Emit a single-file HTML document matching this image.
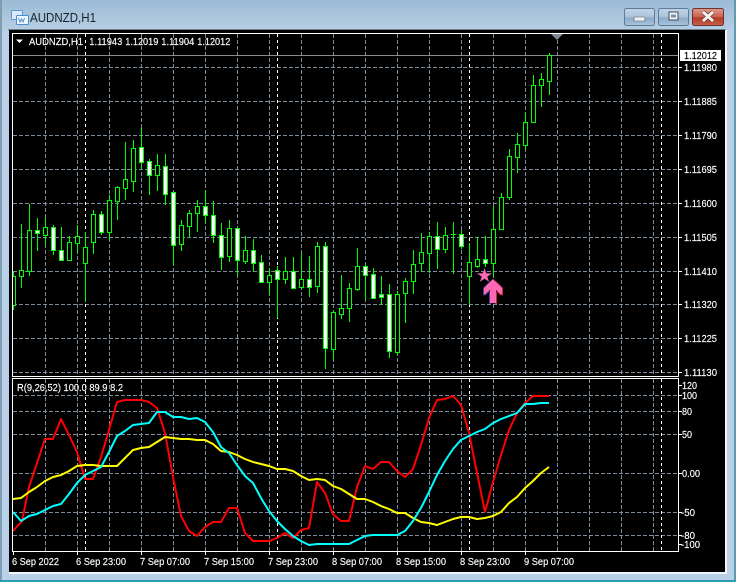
<!DOCTYPE html>
<html><head><meta charset="utf-8"><style>
html,body{margin:0;padding:0;width:736px;height:582px;overflow:hidden;background:#b8d0e6}
svg{display:block}
text{font-family:"Liberation Sans",sans-serif;font-size:10.5px;fill:#fff;stroke:#fff;stroke-width:.15}
</style></head><body>
<svg width="736" height="582" viewBox="0 0 736 582" xmlns="http://www.w3.org/2000/svg">
<defs>
<linearGradient id="tv" x1="0" y1="0" x2="0" y2="1"><stop offset="0" stop-color="#9db9d4"/><stop offset="1" stop-color="#b6cee3"/></linearGradient>
<linearGradient id="bt" x1="0" y1="0" x2="0" y2="1"><stop offset="0" stop-color="#c3d5e6"/><stop offset=".5" stop-color="#a9c2da"/><stop offset=".55" stop-color="#8eabc8"/><stop offset="1" stop-color="#a8c4dc"/></linearGradient>
<linearGradient id="cl" x1="0" y1="0" x2="0" y2="1"><stop offset="0" stop-color="#dd9a8c"/><stop offset=".5" stop-color="#c9604e"/><stop offset=".55" stop-color="#b43a26"/><stop offset="1" stop-color="#c8604a"/></linearGradient>
<clipPath id="c"><rect x="13" y="34" width="665" height="342"/></clipPath>
</defs>

<!-- window -->
<rect width="736" height="582" fill="#b9d1e8"/>
<rect width="736" height="30" fill="url(#tv)"/>
<rect x="0" y="0" width="2" height="582" fill="#7f9cb0"/>
<rect x="734" y="0" width="2" height="582" fill="#5f9bad"/>
<rect x="0" y="580" width="736" height="2" fill="#2a9db0"/>
<rect x="8" y="29" width="718" height="1" fill="#6e7f90"/>
<rect x="9" y="30" width="716" height="542" fill="#000"/>
<rect x="9" y="572" width="718" height="2" fill="#f2f6fa"/>
<rect x="725" y="30" width="2" height="544" fill="#f2f6fa"/>

<!-- title -->
<g>
<rect x="11.5" y="10.5" width="11" height="9" rx="1" fill="#dbeafa" stroke="#5c9ad6"/>
<rect x="16.5" y="15.5" width="12" height="9" rx="1" fill="#f2f8ff" stroke="#4a90d0"/>
<path d="M18.5 18l1.5 4 1.5-3 1.5 3 1.5-4" fill="none" stroke="#4a90d0"/>
</g>
<text x="30" y="22" style="font-size:13px;fill:#16222e;stroke:none" textLength="66" lengthAdjust="spacingAndGlyphs">AUDNZD,H1</text>

<!-- buttons -->
<rect x="624.5" y="8.5" width="30" height="17" rx="2" fill="url(#bt)" stroke="#5d7a99"/>
<rect x="634" y="17" width="11" height="4" rx="1" fill="#eef3f8" stroke="#4d5c6c" stroke-width=".6"/>
<rect x="658.5" y="8.5" width="30" height="17" rx="2" fill="url(#bt)" stroke="#5d7a99"/>
<rect x="669" y="12" width="9" height="8" fill="#eef3f8" stroke="#3e4c5c"/>
<rect x="671" y="14.5" width="5" height="3" fill="#7d93a8"/>
<rect x="692.5" y="8.5" width="31" height="17" rx="2" fill="url(#cl)" stroke="#6e3232"/>
<path d="M703 12l10 9M713 12l-10 9" stroke="#4a2a2a" stroke-width="4.2"/>
<path d="M703 12l10 9M713 12l-10 9" stroke="#f5f0ee" stroke-width="3"/>

<!-- grid main -->
<g stroke="#7f8c9c" stroke-dasharray="4 2" fill="none" shape-rendering="crispEdges">
<path d="M13 67.5H678M13 101.5H678M13 135.5H678M13 169.5H678M13 203.5H678M13 237.5H678M13 271.5H678M13 304.5H678M13 338.5H678M13 372.5H678"/>
<path d="M45.5 34V376M77.5 34V376M109.5 34V376M141.5 34V376M173.5 34V376M205.5 34V376M237.5 34V376M269.5 34V376M301.5 34V376M333.5 34V376M365.5 34V376M397.5 34V376M429.5 34V376M461.5 34V376M493.5 34V376M525.5 34V376M557.5 34V376M589.5 34V376M621.5 34V376M653.5 34V376"/>
</g>
<path d="M85.5 34V376M277.5 34V376M469.5 34V376M661.5 34V376" stroke="#fff" stroke-dasharray="3 3" fill="none" shape-rendering="crispEdges"/>
<path d="M13 55.5H678" stroke="#8a8f94" shape-rendering="crispEdges"/>
<path d="M551 34h12l-6 6z" fill="#7f8a96"/>

<!-- candles -->
<g clip-path="url(#c)" shape-rendering="crispEdges">
<path fill="none" stroke="#00ff00" d="M13.5 271V310M21.5 224V288M29.5 204V276M37.5 218V251M45.5 218V245M53.5 225V255M61.5 227V261M69.5 236V261M77.5 225V253M85.5 232V302M93.5 210V254M101.5 211V235M109.5 195V240M117.5 186V220M125.5 142V200M133.5 140V192M141.5 128V169M149.5 159V195M157.5 154V191M165.5 154V205M173.5 192V265M181.5 220V251M189.5 210V237M197.5 200V232M205.5 190V223M213.5 201V243M221.5 223V270M229.5 220V262M237.5 228V276M245.5 236V264M253.5 239V272M261.5 255V283M269.5 268V295M277.5 266V318M285.5 257V284M293.5 257V288M301.5 253V290M309.5 256V297M317.5 242V293M325.5 242V369M333.5 310V360M341.5 275V319M349.5 283V322M357.5 248V291M365.5 265V300M373.5 268V299M381.5 276V305M389.5 284V358M397.5 291V355M405.5 278V323M413.5 250V294M421.5 233V272M429.5 232V273M437.5 222V269M445.5 227V253M453.5 222V274M461.5 230V249M469.5 243V305M477.5 237V268M485.5 236V267M493.5 206V277M501.5 193V230M509.5 149V200M517.5 133V173M525.5 112V150M533.5 75V123M541.5 73V107M549.5 53V95M451 234.5H456"/>
<path fill="#000" stroke="#00ff00" d="M11.5 276.5v29h4v-29zM19.5 270.5v6h4v-6zM27.5 230.5v41h4v-41zM43.5 227.5v8h4v-8zM67.5 242.5v18h4v-18zM75.5 236.5v7h4v-7zM83.5 247.5v16h4v-16zM91.5 214.5v28h4v-28zM107.5 200.5v32h4v-32zM115.5 187.5v14h4v-14zM123.5 179.5v9h4v-9zM131.5 148.5v33h4v-33zM155.5 165.5v10h4v-10zM179.5 225.5v19h4v-19zM187.5 213.5v13h4v-13zM195.5 206.5v7h4v-7zM227.5 228.5v28h4v-28zM243.5 250.5v11h4v-11zM267.5 275.5v7h4v-7zM283.5 271.5v8h4v-8zM299.5 279.5v8h4v-8zM315.5 246.5v40h4v-40zM331.5 312.5v37h4v-37zM339.5 308.5v6h4v-6zM347.5 288.5v20h4v-20zM355.5 266.5v23h4v-23zM395.5 294.5v58h4v-58zM403.5 281.5v12h4v-12zM411.5 264.5v17h4v-17zM419.5 252.5v11h4v-11zM427.5 236.5v17h4v-17zM443.5 235.5v14h4v-14zM467.5 262.5v14h4v-14zM475.5 259.5v7h4v-7zM491.5 229.5v34h4v-34zM499.5 197.5v32h4v-32zM507.5 156.5v41h4v-41zM515.5 144.5v13h4v-13zM523.5 122.5v23h4v-23zM531.5 85.5v37h4v-37zM539.5 79.5v6h4v-6zM547.5 55.5v26h4v-26z"/>
<path fill="#fff" stroke="#00ff00" d="M35.5 230.5v3h4v-3zM51.5 227.5v23h4v-23zM59.5 250.5v10h4v-10zM99.5 214.5v18h4v-18zM139.5 147.5v15h4v-15zM147.5 161.5v14h4v-14zM163.5 166.5v28h4v-28zM171.5 192.5v53h4v-53zM203.5 206.5v9h4v-9zM211.5 215.5v20h4v-20zM219.5 235.5v22h4v-22zM235.5 228.5v32h4v-32zM251.5 250.5v13h4v-13zM259.5 262.5v20h4v-20zM275.5 270.5v9h4v-9zM291.5 271.5v17h4v-17zM307.5 279.5v8h4v-8zM323.5 246.5v102h4v-102zM363.5 266.5v9h4v-9zM371.5 274.5v24h4v-24zM379.5 294.5v3h4v-3zM387.5 294.5v57h4v-57zM435.5 236.5v13h4v-13zM459.5 234.5v12h4v-12zM483.5 259.5v4h4v-4z"/>
</g>

<!-- star + arrow -->
<polygon points="484.5,268 486.3,273.3 492,273.3 487.4,276.7 489.2,282 484.5,278.8 479.8,282 481.6,276.7 477,273.3 482.7,273.3" fill="#ff69b4" stroke="#3a2a6a" stroke-width=".4"/>
<polygon points="492,279 483,288 483,296 489,290 489,304 491,304 491,290 485,296 485,288" fill="#4a3aa0"/>
<polygon points="494,279 503,288 503,296 497,290 497,304 495,304 495,290 501,296 501,288" fill="#d02040"/>
<polygon points="493,279 502,288 502,295 496,290 496,303 490,303 490,290 484,295 484,288" fill="#ff69b4"/>

<!-- grid indicator -->
<g stroke="#7f8c9c" stroke-dasharray="4 2" fill="none" shape-rendering="crispEdges">
<path d="M13 395.5H678M13 411.5H678M13 434.5H678M13 473.5H678M13 512.5H678M13 535.5H678"/>
<path d="M45.5 379V551M77.5 379V551M109.5 379V551M141.5 379V551M173.5 379V551M205.5 379V551M237.5 379V551M269.5 379V551M301.5 379V551M333.5 379V551M365.5 379V551M397.5 379V551M429.5 379V551M461.5 379V551M493.5 379V551M525.5 379V551M557.5 379V551M589.5 379V551M621.5 379V551M653.5 379V551"/>
</g>
<path d="M85.5 379V551M277.5 379V551M469.5 379V551M661.5 379V551" stroke="#fff" stroke-dasharray="3 3" fill="none" shape-rendering="crispEdges"/>

<!-- indicator lines -->
<g fill="none" stroke-width="2" stroke-linejoin="round">
<polyline stroke="#ff0000" points="13,531 22,521 29,487 37,463 45,439 53,439 61,419 69,435 77,452 85,479 93,479 101,457 109,430 117,402 125,400 133,400 141,400 149,402 157,408 165,433 173,477 181,516 189,531 197,536 205,527 213,522 221,522 229,508 237,508 245,533 253,541 261,541 269,541 277,538 285,533 293,538 301,530 309,528 317,482 325,493 333,514 341,521 349,521 357,487 365,466 373,469 381,462 389,462 397,471 405,477 413,469 421,445 429,418 437,400 445,399 453,396 461,405 469,433 477,473 485,512 493,482 501,455 509,430 517,413 525,403 533,396 541,396 549,396"/>
<polyline stroke="#ffff00" points="13,499 21,498 29,492 37,487 45,481 53,477 61,475 69,471 77,466 85,465 93,465 101,466 109,466 117,466 125,458 133,450 141,448 149,447 157,442 165,437 173,438 181,439 189,439 197,440 205,440 213,444 221,451 229,452 237,455 245,459 253,462 261,464 269,466 277,469 285,469 293,471 301,476 309,480 317,479 325,480 333,486 341,489 349,494 357,499 365,499 373,502 381,506 389,509 397,513 405,513 413,518 421,522 429,523 437,525 445,522 453,519 461,517 469,517 477,519 485,518 493,516 501,512 509,503 517,497 525,488 533,481 541,473 549,467"/>
<polyline stroke="#00ffff" points="13,512 21,521 29,516 37,514 45,510 53,506 61,504 69,494 77,483 85,475 93,471 101,467 109,452 117,436 125,431 133,425 141,424 149,423 157,412 165,412 173,417 181,417 189,419 197,418 205,422 213,432 221,447 229,453 237,465 245,476 253,483 261,498 269,511 277,521 285,529 293,536 301,541 309,545 317,544 325,544 333,544 341,544 349,544 357,540 365,536 373,535 381,535 389,535 397,535 405,531 413,521 421,508 429,492 437,475 445,461 453,449 461,440 469,436 477,432 485,429 493,423 501,419 509,416 517,413 525,404 533,404 541,403 549,403"/>
</g>

<!-- frames -->
<g fill="none" stroke="#fff" shape-rendering="crispEdges">
<rect x="12.5" y="33.5" width="666" height="343"/>
<rect x="12.5" y="378.5" width="666" height="173"/>
</g>
<path stroke="#fff" shape-rendering="crispEdges" d="M13.5 552v3M77.5 552v3M141.5 552v3M205.5 552v3M269.5 552v3M333.5 552v3M397.5 552v3M461.5 552v3M525.5 552v3M679 67.5h3M679 101.5h3M679 135.5h3M679 169.5h3M679 203.5h3M679 237.5h3M679 271.5h3M679 304.5h3M679 338.5h3M679 372.5h3M679 385.5h3M679 395.5h3M679 411.5h3M679 434.5h3M679 473.5h3M679 512.5h3M679 535.5h3M679 544.5h3" fill="none"/>

<!-- header text -->
<path d="M16 39.5h7l-3.5 3.5z" fill="#fff"/>
<text x="29" y="45" textLength="54" lengthAdjust="spacingAndGlyphs">AUDNZD,H1</text>
<text x="89.3" y="45" textLength="33" lengthAdjust="spacingAndGlyphs">1.11943</text>
<text x="125.3" y="45" textLength="33" lengthAdjust="spacingAndGlyphs">1.12019</text>
<text x="161.3" y="45" textLength="33" lengthAdjust="spacingAndGlyphs">1.11904</text>
<text x="197.3" y="45" textLength="33" lengthAdjust="spacingAndGlyphs">1.12012</text>

<!-- price labels -->
<rect x="680" y="50" width="41" height="11" fill="#fff"/>
<text x="684" y="59" textLength="33" lengthAdjust="spacingAndGlyphs" style="fill:#000;stroke:#000">1.12012</text>
<text x="684" y="71" textLength="33" lengthAdjust="spacingAndGlyphs">1.11980</text>
<text x="684" y="105" textLength="33" lengthAdjust="spacingAndGlyphs">1.11885</text>
<text x="684" y="139" textLength="33" lengthAdjust="spacingAndGlyphs">1.11790</text>
<text x="684" y="173" textLength="33" lengthAdjust="spacingAndGlyphs">1.11695</text>
<text x="684" y="207" textLength="33" lengthAdjust="spacingAndGlyphs">1.11600</text>
<text x="684" y="241" textLength="33" lengthAdjust="spacingAndGlyphs">1.11505</text>
<text x="684" y="275" textLength="33" lengthAdjust="spacingAndGlyphs">1.11410</text>
<text x="684" y="308" textLength="33" lengthAdjust="spacingAndGlyphs">1.11320</text>
<text x="684" y="342" textLength="33" lengthAdjust="spacingAndGlyphs">1.11225</text>
<text x="684" y="376" textLength="33" lengthAdjust="spacingAndGlyphs">1.11130</text>

<!-- indicator labels -->
<text x="17" y="391" textLength="106" lengthAdjust="spacingAndGlyphs">R(9,26,52) 100.0 89.9 8.2</text>
<text x="682" y="389" textLength="15" lengthAdjust="spacingAndGlyphs">120</text>
<text x="682" y="399" textLength="15" lengthAdjust="spacingAndGlyphs">100</text>
<text x="682" y="415" textLength="10" lengthAdjust="spacingAndGlyphs">80</text>
<text x="682" y="438" textLength="10" lengthAdjust="spacingAndGlyphs">50</text>
<text x="682" y="477" textLength="18" lengthAdjust="spacingAndGlyphs">0.00</text>
<text x="681" y="516" textLength="14" lengthAdjust="spacingAndGlyphs">-50</text>
<text x="681" y="539" textLength="14" lengthAdjust="spacingAndGlyphs">-80</text>
<text x="681" y="548" textLength="19" lengthAdjust="spacingAndGlyphs">-100</text>

<!-- time labels -->
<text x="12" y="565" textLength="47" lengthAdjust="spacingAndGlyphs">6 Sep 2022</text>
<text x="76" y="565" textLength="50" lengthAdjust="spacingAndGlyphs">6 Sep 23:00</text>
<text x="140" y="565" textLength="50" lengthAdjust="spacingAndGlyphs">7 Sep 07:00</text>
<text x="204" y="565" textLength="50" lengthAdjust="spacingAndGlyphs">7 Sep 15:00</text>
<text x="268" y="565" textLength="50" lengthAdjust="spacingAndGlyphs">7 Sep 23:00</text>
<text x="332" y="565" textLength="50" lengthAdjust="spacingAndGlyphs">8 Sep 07:00</text>
<text x="396" y="565" textLength="50" lengthAdjust="spacingAndGlyphs">8 Sep 15:00</text>
<text x="460" y="565" textLength="50" lengthAdjust="spacingAndGlyphs">8 Sep 23:00</text>
<text x="524" y="565" textLength="50" lengthAdjust="spacingAndGlyphs">9 Sep 07:00</text>
</svg>
</body></html>
